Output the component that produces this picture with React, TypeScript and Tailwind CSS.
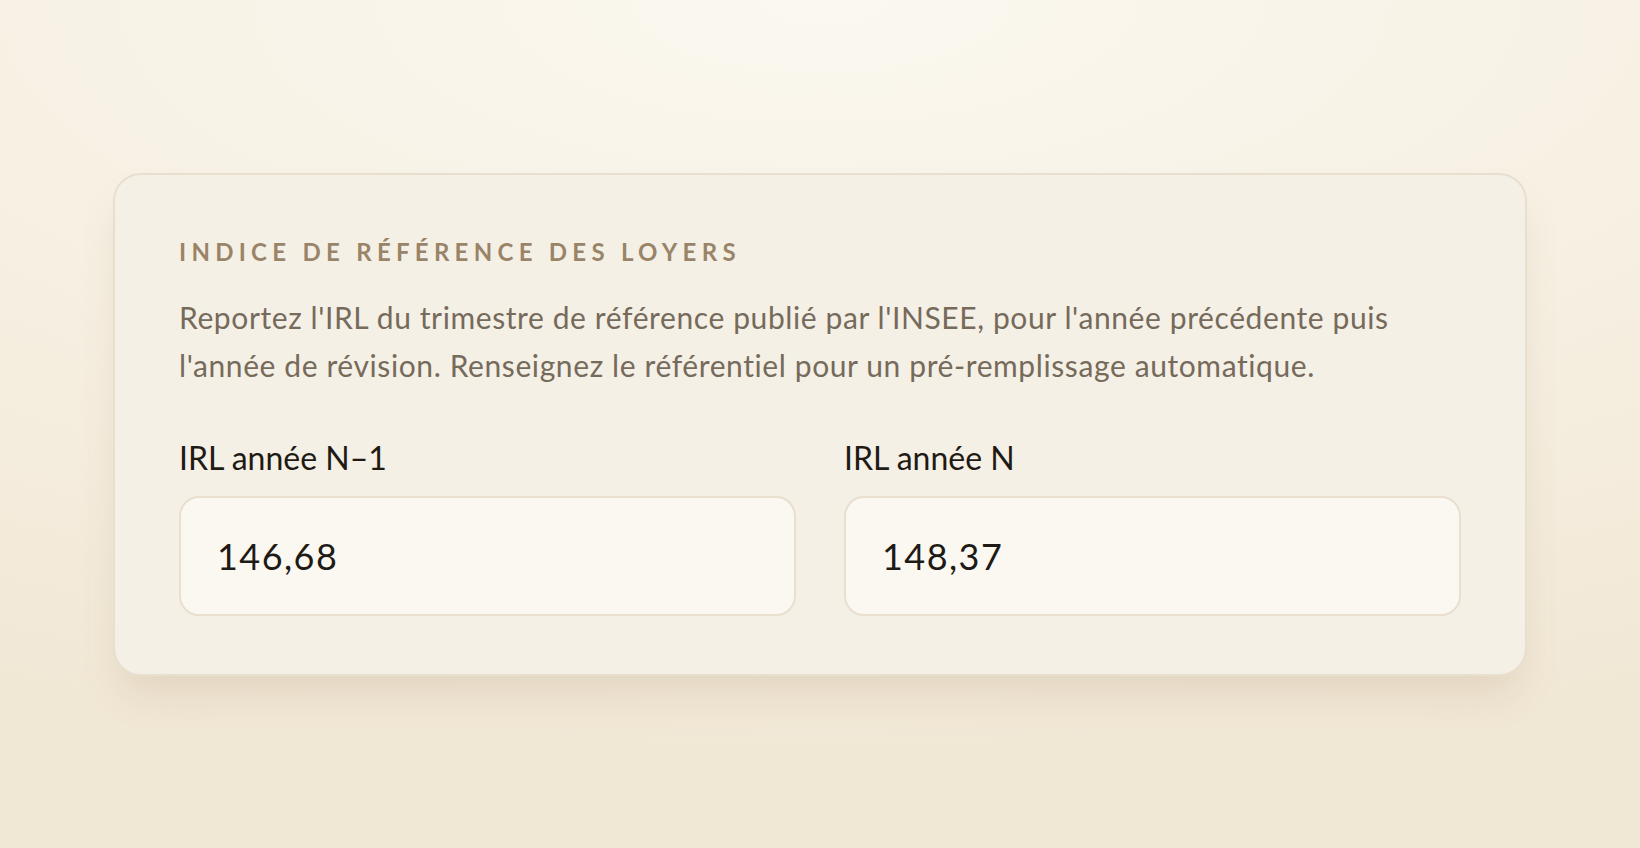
import React from "react";

export default function App() {
  return (
    <div
      className="flex h-[848px] w-full items-center justify-center bg-[radial-gradient(ellipse_120%_90%_at_50%_0%,#fbf8f0_0%,#f7f1e4_45%,#f1e7d5_100%)]"
      style={{ fontFamily: "Lato, 'Noto Sans', sans-serif" }}
    >
      <div className="w-[1414px] rounded-[28px] border-2 border-[#e8dfcf] bg-[#f4f0e6] px-[64px] pt-[65px] pb-[58px] shadow-[0_24px_40px_-8px_rgba(140,110,70,0.16)]">
        <h2 className="text-[24px] leading-[24px] font-bold uppercase tracking-[0.22em] text-[#9a8468]">
          Indice de référence des loyers
        </h2>
        <p className="mt-[29px] text-[30px] leading-[48px] tracking-[0.02em] text-[#766a5b]">
          Reportez l'IRL du trimestre de référence publié par l'INSEE, pour l'année précédente puis
          <br />
          l'année de révision. Renseignez le référentiel pour un pré-remplissage automatique.
        </p>
        <div className="mt-[49px] grid grid-cols-2 gap-[48px]">
          <div>
            <label className="block text-[32px] leading-[40px] text-[#1f1a14]">IRL année N–1</label>
            <div className="mt-[18px] flex h-[120px] items-center rounded-[20px] border-2 border-[#e8dfcf] bg-[#fbf8f1] px-[36px] text-[36px] tracking-[0.04em] text-[#1e1a15]">
              146,68
            </div>
          </div>
          <div>
            <label className="block text-[32px] leading-[40px] text-[#1f1a14]">IRL année N</label>
            <div className="mt-[18px] flex h-[120px] items-center rounded-[20px] border-2 border-[#e8dfcf] bg-[#fbf8f1] px-[36px] text-[36px] tracking-[0.04em] text-[#1e1a15]">
              148,37
            </div>
          </div>
        </div>
      </div>
    </div>
  );
}
